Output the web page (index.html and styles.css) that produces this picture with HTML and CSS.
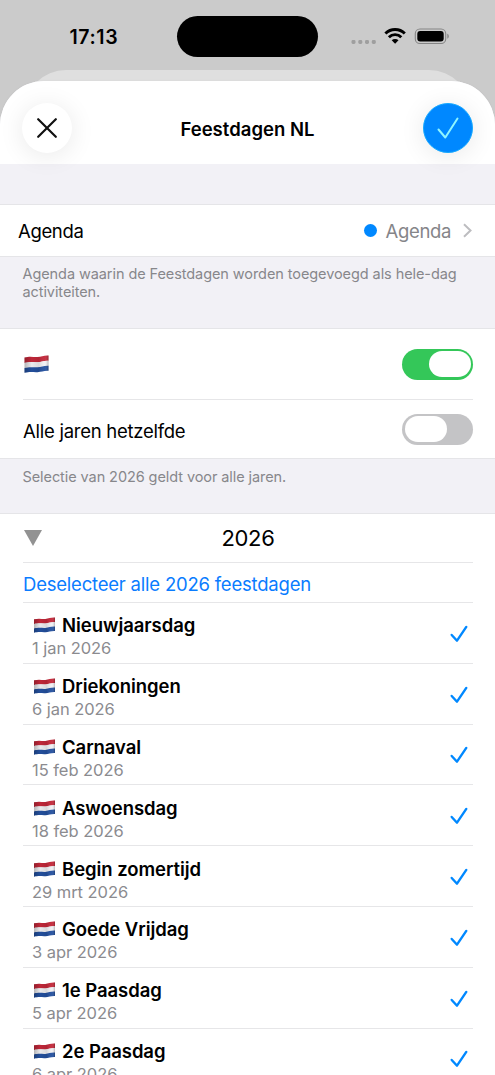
FILE: index.html
```html
<!DOCTYPE html>
<html lang="nl">
<head>
<meta charset="utf-8">
<title>Feestdagen NL</title>
<link rel="stylesheet" href="styles.css">
</head>
<body>
<svg class="defs" width="0" height="0" aria-hidden="true">
  <defs>
    <linearGradient id="shade" x1="0" x2="1" y1="0" y2="0">
      <stop offset="0" stop-color="#000" stop-opacity=".25"/>
      <stop offset=".3" stop-color="#000" stop-opacity=".03"/>
      <stop offset=".6" stop-color="#000" stop-opacity=".1"/>
      <stop offset=".85" stop-color="#fff" stop-opacity=".04"/>
      <stop offset="1" stop-color="#000" stop-opacity=".25"/>
    </linearGradient>
    <symbol id="flag" viewBox="0 0 24 18">
      <path fill="#c4283a" d="M0 2.500C6 1 9 2.300 13 2C17 1.700 19 .3 24 .5V5.800C19 5.500 17 7 13 7.300C9 7.500 6 6.500 0 8z"/>
      <path fill="#f1f1f4" d="M0 7.800C6 6.300 9 7.500 13 7.200C17 6.900 19 5.500 24 5.700V11.200C19 11 17 12.400 13 12.700C9 12.900 6 11.900 0 13.400z"/>
      <path fill="#2451a0" d="M0 12.900C6 11.400 9 12.600 13 12.300C17 12 19 10.600 24 10.800V15.800C19 15.600 17 17 13 17.200C9 17.500 6 16.300 0 17.800z"/>
      <path fill="url(#shade)" d="M0 2.500C6 1 9 2.300 13 2C17 1.700 19 .3 24 .5V15.800C19 15.600 17 17 13 17.200C9 17.500 6 16.300 0 17.800z"/>
    </symbol>
    <symbol id="tick" viewBox="0 0 18 18">
      <path fill="none" stroke="#0088ff" stroke-width="2.400" stroke-linecap="round" stroke-linejoin="round" d="M1.700 10 7 15.700 16.300 1.900"/>
    </symbol>
  </defs>
</svg>
<div class="screen">
  <div class="status">
    <span class="clock">17:13</span>
    <span class="island"></span>
    <span class="indicators">
      <svg width="100" height="20" viewBox="0 0 100 20">
        <g fill="#9f9f9f"><rect x="1.500" y="12" width="4" height="4" rx="1.400"/><rect x="8.300" y="12" width="4" height="4" rx="1.400"/><rect x="15" y="12" width="4" height="4" rx="1.400"/><rect x="21.800" y="12" width="4" height="4" rx="1.400"/></g>
        <g fill="none" stroke="#000" stroke-width="2.900"><path d="M35.400 5.500a13.700 13.700 0 0 1 19.400 0"/><path d="M38.900 9.200a8.800 8.800 0 0 1 12.400 0"/></g>
        <path d="M41.700 12.300a4.900 4.900 0 0 1 6.800 0L45.100 15.700z"/>
        <rect x="65.300" y="1" width="30.400" height="14.500" rx="4.600" fill="none" stroke="#858585" stroke-width="1.100"/>
        <rect x="67.300" y="3" width="26.400" height="10.500" rx="2.900"/>
        <path fill="#858585" d="M97.300 5.800c2 .5 2 4.400 0 4.900z"/>
      </svg>
    </span>
  </div>
  <div class="sheet-back"></div>
  <main class="sheet">
    <header class="navbar">
      <span class="round close"><svg width="20" height="20" viewBox="0 0 20 20"><path stroke="#111" stroke-width="2.200" stroke-linecap="round" d="M1.200 1.200 18.800 18.800M18.800 1.200 1.200 18.800"/></svg></span>
      <h1 class="title">Feestdagen NL</h1>
      <span class="round done"><svg width="22" height="22" viewBox="0 0 22 22"><path fill="none" stroke="#8ff5ff" stroke-width="2" stroke-linecap="round" stroke-linejoin="round" d="M1.500 12.500 8.300 20.500 20.500 1.500"/></svg></span>
    </header>
    <section class="group calendar">
      <span class="label">Agenda</span>
      <span class="value"><i class="dot"></i><span class="label">Agenda</span><svg class="chevron" width="9" height="15" viewBox="0 0 9 15"><path fill="none" stroke="#bdbdc0" stroke-width="2" d="M1 1.300 7.500 7.500 1 13.700"/></svg></span>
    </section>
    <p class="note note-calendar"><span class="note-first">Agenda waarin de Feestdagen worden toegevoegd als hele-dag</span><br>activiteiten.</p>
    <section class="group options">
      <div class="row country"><svg class="flag-big" width="25" height="18"><use href="#flag"/></svg><span class="switch on"></span></div>
      <div class="row same"><span class="label same-label">Alle jaren hetzelfde</span><span class="switch"></span></div>
    </section>
    <p class="note note-years">Selectie van 2026 geldt voor alle jaren.</p>
    <section class="group holidays">
      <div class="row year"><svg class="triangle" width="18" height="16" viewBox="0 0 18 16"><path fill="#929292" d="M0 0h18L9 16z"/></svg><span class="year-number">2026</span></div>
      <div class="row deselect">Deselecteer alle 2026 feestdagen</div>
      <ul class="list">
        <li class="holiday"><div><div class="name"><svg class="flag"><use href="#flag"/></svg><b>Nieuwjaarsdag</b></div><div class="date">1 jan 2026</div></div><svg class="tick"><use href="#tick"/></svg></li>
        <li class="holiday"><div><div class="name"><svg class="flag"><use href="#flag"/></svg><b>Driekoningen</b></div><div class="date">6 jan 2026</div></div><svg class="tick"><use href="#tick"/></svg></li>
        <li class="holiday"><div><div class="name"><svg class="flag"><use href="#flag"/></svg><b>Carnaval</b></div><div class="date">15 feb 2026</div></div><svg class="tick"><use href="#tick"/></svg></li>
        <li class="holiday"><div><div class="name"><svg class="flag"><use href="#flag"/></svg><b>Aswoensdag</b></div><div class="date">18 feb 2026</div></div><svg class="tick"><use href="#tick"/></svg></li>
        <li class="holiday"><div><div class="name"><svg class="flag"><use href="#flag"/></svg><b>Begin zomertijd</b></div><div class="date">29 mrt 2026</div></div><svg class="tick"><use href="#tick"/></svg></li>
        <li class="holiday"><div><div class="name"><svg class="flag"><use href="#flag"/></svg><b>Goede Vrijdag</b></div><div class="date">3 apr 2026</div></div><svg class="tick"><use href="#tick"/></svg></li>
        <li class="holiday"><div><div class="name"><svg class="flag"><use href="#flag"/></svg><b>1e Paasdag</b></div><div class="date">5 apr 2026</div></div><svg class="tick"><use href="#tick"/></svg></li>
        <li class="holiday"><div><div class="name"><svg class="flag"><use href="#flag"/></svg><b>2e Paasdag</b></div><div class="date">6 apr 2026</div></div><svg class="tick"><use href="#tick"/></svg></li>
      </ul>
    </section>
  </main>
</div>
</body>
</html>
```
FILE: styles.css
```css
* { box-sizing: border-box; }
body { margin: 0; font-family: Inter, "Liberation Sans", sans-serif; color: #000; }
.defs { position: absolute; }
.screen { width: 495px; height: 1075px; overflow: hidden; background: #cbcbcb; display: flex; flex-direction: column; }
.status { height: 70px; flex: none; display: grid; grid-template-columns: 177px 141px 1fr; align-items: start; }
.clock { padding: 25px 0 0 69.500px; font-size: 19.500px; line-height: 24px; font-weight: 600; letter-spacing: .6px; }
.island { margin-top: 16px; height: 41px; border-radius: 21px; background: #000; }
.indicators { padding: 28px 0 0 32px; line-height: 0; }
.sheet-back { height: 50px; flex: none; margin: 0 24px -39px; border-radius: 42px 42px 0 0; background: #dfdfdf; }
.sheet { flex: 1; min-height: 0; overflow: hidden; margin: 0; border-radius: 44px 44px 0 0; background: #f2f1f6; box-shadow: 0 0 3px rgba(0,0,0,.04); }
.navbar { height: 83px; padding: 11px 22px 0; display: flex; justify-content: space-between; align-items: center; background: #fff; }
.round { width: 50px; height: 50px; border-radius: 50%; display: flex; align-items: center; justify-content: center; background: #fff; box-shadow: 0 3px 26px rgba(0,0,0,.09); }
.done { background: #0088ff; border: 1px solid #16a9ff; }
.title { margin: 0; padding-top: 2px; font-size: 18.500px; line-height: 24px; font-weight: 600; letter-spacing: .03px; }
.group { background: #fff; border-top: 1px solid #e5e5e8; border-bottom: 1px solid #e5e5e8; }
.calendar { margin-top: 40px; height: 53px; padding: 0 23px 0 18px; display: flex; align-items: center; justify-content: space-between; }
.label { padding-top: 1px; font-size: 18.500px; line-height: 24px; }
.calendar .label { letter-spacing: -.35px; }
.value { display: flex; align-items: center; color: #858589; }
.dot { width: 13px; height: 13px; margin-right: 9px; border-radius: 50%; background: #0088ff; }
.chevron { margin-left: 12px; }
.note { margin: 0; padding: 8px 20px 0 22.500px; font-size: 14.500px; line-height: 18px; letter-spacing: -.08px; color: #87878b; }
.note-first { white-space: nowrap; }
.note-calendar { height: 71px; }
.note-years { height: 53.500px; padding-top: 9px; }
.row { margin: 0 22px 0 23px; display: flex; align-items: center; justify-content: space-between; }
.country { height: 71px; border-bottom: 1px solid #e6e6e8; }
.flag-big { margin: 0 0 0 1px; }
.same { height: 58px; }
.same .label { padding-top: 3px; letter-spacing: -.26px; }
.switch { width: 71px; height: 31px; padding: 2.500px; border-radius: 16px; background: #c4c4c6; display: flex; }
.switch::before { content: ""; width: 42px; border-radius: 14px; background: #fff; }
.switch.on { background: #34c759; justify-content: flex-end; }
.year { height: 49px; border-bottom: 1px solid #e6e6e8; display: grid; grid-template-columns: 18px 1fr 18px; }
.triangle { margin-left: 1px; }
.year-number { text-align: center; font-size: 22px; line-height: 28px; letter-spacing: -.3px; }
.deselect { height: 40.500px; padding-top: 3px; border-bottom: 1px solid #e6e6e8; color: #0a7cff; font-size: 18.500px; letter-spacing: -.21px; }
.list { margin: 0; padding: 0; list-style: none; }
.holiday { height: 60.800px; margin: 0 22px 0 23px; padding: 2px 5px 0 9px; border-bottom: 1px solid #e6e6e8; display: flex; align-items: center; justify-content: space-between; }
.name { padding-top: 6px; display: flex; align-items: center; font-size: 18.500px; line-height: 23px; }
.name b { font-weight: 600; letter-spacing: -.06px; }
.flag { width: 21px; height: 16px; margin: -1px 7px 0 2px; }
.date { font-size: 16.500px; line-height: 22px; letter-spacing: -.05px; color: #8b8b8f; }
.tick { width: 18px; height: 18px; }
```
